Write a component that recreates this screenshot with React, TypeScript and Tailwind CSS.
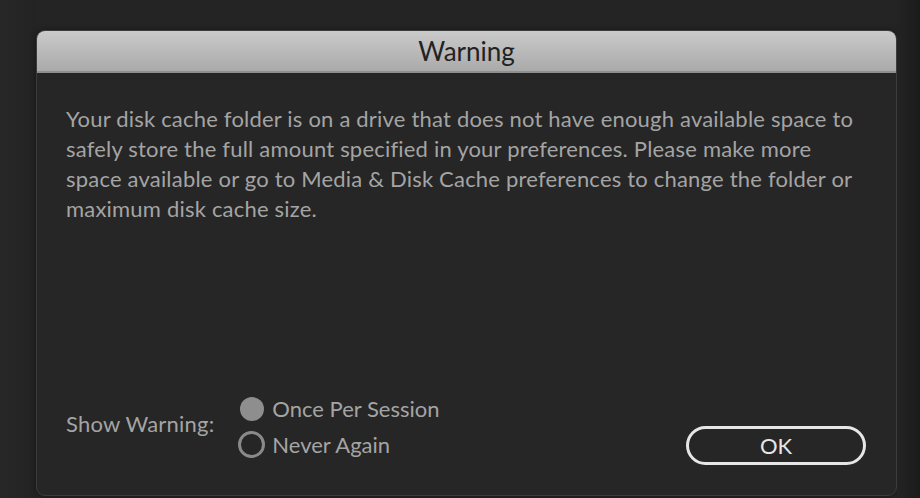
export default function App() {
  const lines = [
    'Your disk cache folder is on a drive that does not have enough available space to',
    'safely store the full amount specified in your preferences. Please make more',
    'space available or go to Media & Disk Cache preferences to change the folder or',
    'maximum disk cache size.',
  ];

  return (
    <div
      className="flex h-[498px] w-[920px] overflow-hidden bg-[#242424]"
      style={{ fontFamily: 'Lato, "Open Sans", sans-serif' }}
    >
      <div className="w-[36px] shrink-0 bg-gradient-to-r from-[#272727] to-[#232323]" />
      {/* Dialog */}
      <div className="mt-[30px] flex h-[466px] w-[861px] shrink-0 flex-col overflow-hidden rounded-[9px] border border-[#3c3c3c] bg-[#262626] shadow-[0_0_6px_rgba(0,0,0,0.4)]">
        <div className="flex h-[42px] shrink-0 items-center justify-center border-b-2 border-[#8f8f8f] bg-gradient-to-b from-[#cacaca] to-[#aaaaaa]">
          <span className="text-[26px] leading-none text-[#222]">Warning</span>
        </div>
        <div className="flex flex-1 flex-col px-[29px] pt-[31px] pb-[37px]">
          <div className="text-[22px] leading-[30px] tracking-[0.2px] text-[#a4a4a4]">
            {lines.map((l) => (
              <div key={l} className="whitespace-nowrap">
                {l}
              </div>
            ))}
          </div>
          <div className="mt-auto flex items-end justify-between">
            <div className="flex items-center gap-[24px]">
              <span className="-mt-[8px] text-[22px] tracking-[0.2px] text-[#a4a4a4]">Show Warning:</span>
              <div className="flex flex-col gap-[10px]">
                <div className="flex items-center gap-[8px] pl-[2px]">
                  <span className="h-[24px] w-[24px] rounded-full bg-[#8e8e8e]" />
                  <span className="text-[22px] leading-[24px] text-[#a4a4a4]">Once Per Session</span>
                </div>
                <div className="flex items-center gap-[7px]">
                  <span className="h-[27px] w-[27px] rounded-full border-[3.5px] border-[#8a8a8a]" />
                  <span className="text-[22px] leading-[24px] text-[#a4a4a4]">Never Again</span>
                </div>
              </div>
            </div>
            <button className="-mb-[7px] mr-[1px] flex h-[39px] w-[180px] items-center justify-center rounded-full border-[3px] border-[#e6e6e6] text-[22px] text-[#e6e6e6]">
              OK
            </button>
          </div>
        </div>
      </div>
      <div className="flex-1 bg-gradient-to-r from-[#232323] to-[#1b1b1b]" />
    </div>
  );
}
